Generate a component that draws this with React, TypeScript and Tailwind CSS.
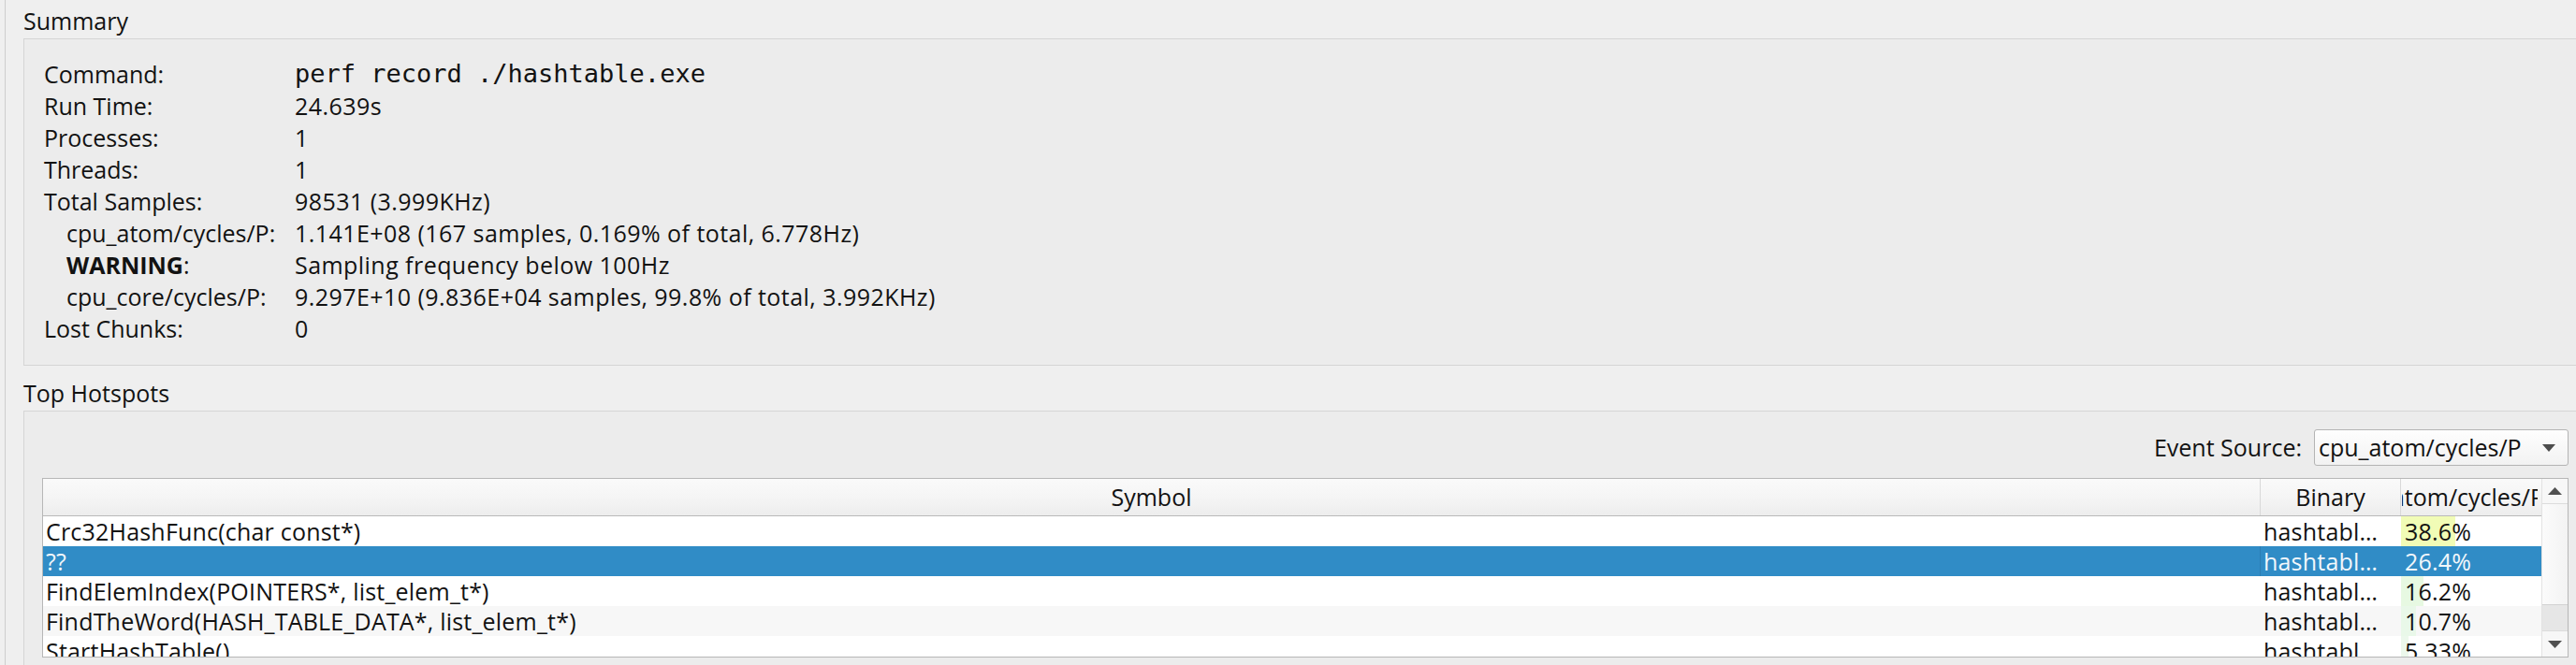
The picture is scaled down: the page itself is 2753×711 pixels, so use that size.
import React from "react";

type Row = { label: string; value: string; indent?: boolean; mono?: boolean; bold?: boolean };

const summary: Row[] = [
  { label: "Command:", value: "perf record ./hashtable.exe", mono: true },
  { label: "Run Time:", value: "24.639s" },
  { label: "Processes:", value: "1" },
  { label: "Threads:", value: "1" },
  { label: "Total Samples:", value: "98531 (3.999KHz)" },
  { label: "cpu_atom/cycles/P:", value: "1.141E+08 (167 samples, 0.169% of total, 6.778Hz)", indent: true },
  { label: "WARNING", value: "Sampling frequency below 100Hz", indent: true, bold: true },
  { label: "cpu_core/cycles/P:", value: "9.297E+10 (9.836E+04 samples, 99.8% of total, 3.992KHz)", indent: true },
  { label: "Lost Chunks:", value: "0" },
];

type Hot = { sym: string; bin: string; pct: string; val: number; bar: string };

const hotspots: Hot[] = [
  { sym: "Crc32HashFunc(char const*)", bin: "hashtabl…", pct: "38.6%", val: 38.6, bar: "#f1fcb6" },
  { sym: "??", bin: "hashtabl…", pct: "26.4%", val: 26.4, bar: "#f4fbd0" },
  { sym: "FindElemIndex(POINTERS*, list_elem_t*)", bin: "hashtabl…", pct: "16.2%", val: 16.2, bar: "#e7f9e2" },
  { sym: "FindTheWord(HASH_TABLE_DATA*, list_elem_t*)", bin: "hashtabl…", pct: "10.7%", val: 10.7, bar: "#e9f8e9" },
  { sym: "StartHashTable()", bin: "hashtabl…", pct: "5.33%", val: 5.33, bar: "#ecf8ec" },
];

function Summary() {
  return (
    <div className="mt-[2px] border-t border-l border-b border-[#d5d5d5] bg-[#ececec] pt-[20px] pb-[22px] pl-[21px]">
      <div className="grid grid-cols-[268px_1fr]">
        {summary.map((r, i) => (
          <React.Fragment key={i}>
            <div className={"h-[34px] leading-[34px] whitespace-nowrap " + (r.indent ? "pl-[24px]" : "")}>
              {r.bold ? (
                <>
                  <span className="font-bold">{r.label}</span>:
                </>
              ) : (
                r.label
              )}
            </div>
            <div
              className={
                "h-[34px] leading-[34px] whitespace-nowrap " +
                (r.mono ? "font-['DejaVu_Sans_Mono',monospace] text-[27px]" : "tracking-[0.45px]")
              }
            >
              {r.value}
            </div>
          </React.Fragment>
        ))}
      </div>
    </div>
  );
}

function Scrollbar() {
  return (
    <div className="w-[28px] flex flex-col bg-[#f4f4f4] border-l border-[#e2e2e2]">
      <div className="h-[27px] flex items-center justify-center border-b border-[#dcdcdc] bg-[#f7f7f7]">
        <svg width="15" height="8" viewBox="0 0 15 8">
          <polygon points="0,8 15,8 7.5,0" fill="#505050" />
        </svg>
      </div>
      <div className="h-[108px] bg-gradient-to-r from-[#fbfbfb] to-[#f3f3f3] border-b border-[#d2d2d2]" />
      <div className="flex-1 bg-[#e6e6e6]" />
      <div className="h-[28px] flex items-center justify-center bg-[#f7f7f7] border-t border-[#dcdcdc]">
        <svg width="15" height="8" viewBox="0 0 15 8">
          <polygon points="0,0 15,0 7.5,8" fill="#505050" />
        </svg>
      </div>
    </div>
  );
}

function Table() {
  return (
    <div className="mt-[13px] h-[192px] w-[2700px] border border-[#b7b7b7] bg-white flex overflow-hidden">
      <div className="flex-1 flex flex-col overflow-hidden">
        <div className="h-[40px] shrink-0 flex border-b border-[#b9b9b9] bg-gradient-to-b from-[#fafafa] via-[#f5f5f5] to-[#ededed]">
          <div className="w-[2370px] shrink-0 border-r border-[#d9d9d9] flex items-center justify-center">Symbol</div>
          <div className="w-[150px] shrink-0 border-r border-[#d9d9d9] flex items-center justify-center">Binary</div>
          <div className="flex-1 flex pl-[1px] pr-[4px]">
            <div className="flex-1 relative overflow-hidden whitespace-nowrap">
              <span className="absolute right-[-7px] top-0 leading-[39px]">cpu_atom/cycles/P</span>
            </div>
          </div>
        </div>
        {hotspots.map((h, i) => {
          const sel = i === 1;
          const alt = i % 2 === 1;
          return (
            <div
              key={i}
              className={
                "h-[32px] shrink-0 flex leading-[32px] whitespace-nowrap tracking-[0.2px] " +
                (sel ? "bg-[#308cc6] text-[#f2f7fb]" : alt ? "bg-[#f7f7f7]" : "bg-white")
              }
            >
              <div className={"w-[2370px] shrink-0 pl-[3px] " + (sel ? "border-r border-[#2b7db3]" : "")}>{h.sym}</div>
              <div className="w-[150px] shrink-0 pl-[3px] overflow-hidden">{h.bin}</div>
              <div className="flex-1 relative overflow-hidden">
                {!sel && (
                  <div className="absolute left-0 top-0 bottom-0" style={{ width: `${h.val}%`, background: h.bar }} />
                )}
                <span className="relative pl-[4px]">{h.pct}</span>
              </div>
            </div>
          );
        })}
      </div>
      <Scrollbar />
    </div>
  );
}

export default function App() {
  return (
    <div className="w-[2753px] h-[711px] overflow-hidden bg-[#efefef] font-['Open_Sans',sans-serif] text-[25px] text-[#121212]">
      <div className="h-full ml-[5px] border-l border-[#cdcdcd] pl-[19px] pt-[5px]">
        <div className="h-[34px] leading-[34px]">Summary</div>
        <Summary />
        <div className="mt-[12px] h-[34px] leading-[34px]">Top Hotspots</div>
        <div className="mt-[2px] border-t border-l border-[#d5d5d5] bg-[#ececec] pt-[19px] pl-[19px] h-[400px]">
          <div className="h-[39px] w-[2700px] flex items-center justify-end">
            <span className="mr-[13px]">Event Source:</span>
            <div className="w-[272px] h-[39px] rounded-[3px] border border-[#b4b4b4] bg-gradient-to-b from-[#fefefe] to-[#f2f2f2] flex items-center pl-[4px] pr-[13px]">
              <span className="flex-1 whitespace-nowrap overflow-hidden">cpu_atom/cycles/P</span>
              <svg width="14" height="8" viewBox="0 0 14 8">
                <polygon points="0,0 14,0 7,8" fill="#4d4d4d" />
              </svg>
            </div>
          </div>
          <Table />
        </div>
      </div>
    </div>
  );
}
